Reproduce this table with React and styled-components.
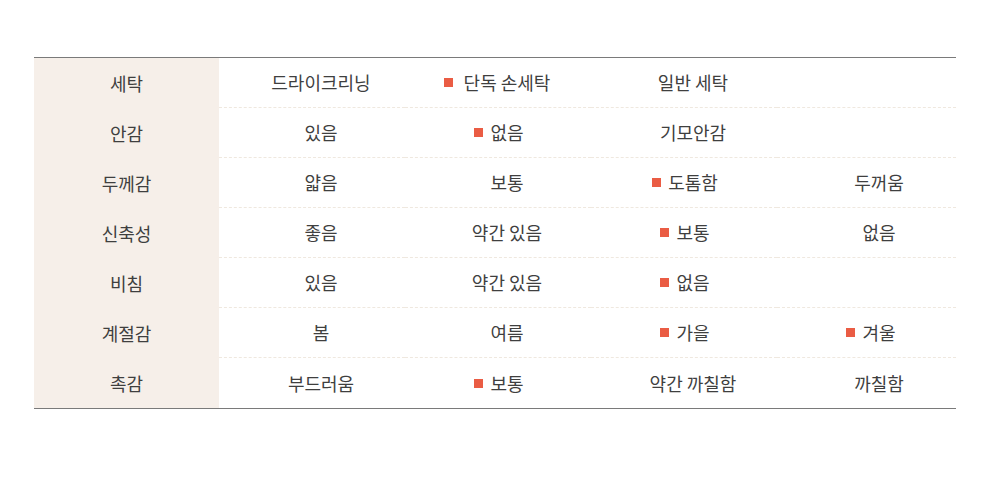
import React from "react";
import styled, { createGlobalStyle } from "styled-components";

const Global = createGlobalStyle`
  html, body { margin: 0; padding: 0; background: #fff; }
  body { font-family: "Noto Sans CJK KR", "Noto Sans", sans-serif; }
`;

const Page = styled.div`
  width: 1000px;
  height: 477px;
  padding: 57px 44px 0 34px;
  box-sizing: border-box;
`;

const Table = styled.div`
  border-top: 1px solid #7a7a7a;
  border-bottom: 1px solid #7a7a7a;
  display: flex;
  flex-direction: column;
`;

const Row = styled.div`
  display: grid;
  grid-template-columns: 185px 186px 186px 186px 1fr;
  height: 50px;
`;

const Head = styled.div`
  background: #f6efe9;
  display: flex;
  align-items: center;
  justify-content: center;
  font-size: 18px;
  color: #3f3f3f;
  padding-bottom: 1px;
  box-sizing: border-box;
`;

const Cell = styled.div`
  display: flex;
  align-items: center;
  justify-content: center;
  padding-left: 18px;
  padding-bottom: 1px;
  box-sizing: border-box;
  font-size: 18px;
  color: #3f3f3f;
  border-bottom: ${(p) => (p.$last ? "none" : "1px dashed #efe8df")};
  &:last-child {
    padding-left: 25px;
  }
`;

const Label = styled.span`
  position: relative;
  white-space: pre;
`;

const Marker = styled.i`
  position: absolute;
  top: 50%;
  right: 100%;
  width: 9px;
  height: 9px;
  margin-top: -4px;
  margin-right: ${(p) => p.$gap}px;
  background: #ea5c44;
`;

const rows = [
  ["세탁", ["드라이크리닝", "단독 손세탁*", "일반 세탁", ""]],
  ["안감", ["있음", "없음*", "기모안감", ""]],
  ["두께감", ["얇음", "보통", "도톰함*", "두꺼움"]],
  ["신축성", ["좋음", "약간 있음", "보통*", "없음"]],
  ["비침", ["있음", "약간 있음", "없음*", ""]],
  ["계절감", ["봄", "여름", "가을*", "겨울*"]],
  ["촉감", ["부드러움", "보통*", "약간 까칠함", "까칠함"]],
];

export default function App() {
  return (
    <>
      <Global />
      <Page>
        <Table>
          {rows.map(([head, cells], ri) => (
            <Row key={head}>
              <Head>{head}</Head>
              {cells.map((c, ci) => {
                const on = c.endsWith("*");
                const text = on ? c.slice(0, -1) : c;
                return (
                  <Cell key={ci} $last={ri === rows.length - 1}>
                    <Label>
                      {on && <Marker $gap={ri === 0 ? 11 : 7} />}
                      {text}
                    </Label>
                  </Cell>
                );
              })}
            </Row>
          ))}
        </Table>
      </Page>
    </>
  );
}
